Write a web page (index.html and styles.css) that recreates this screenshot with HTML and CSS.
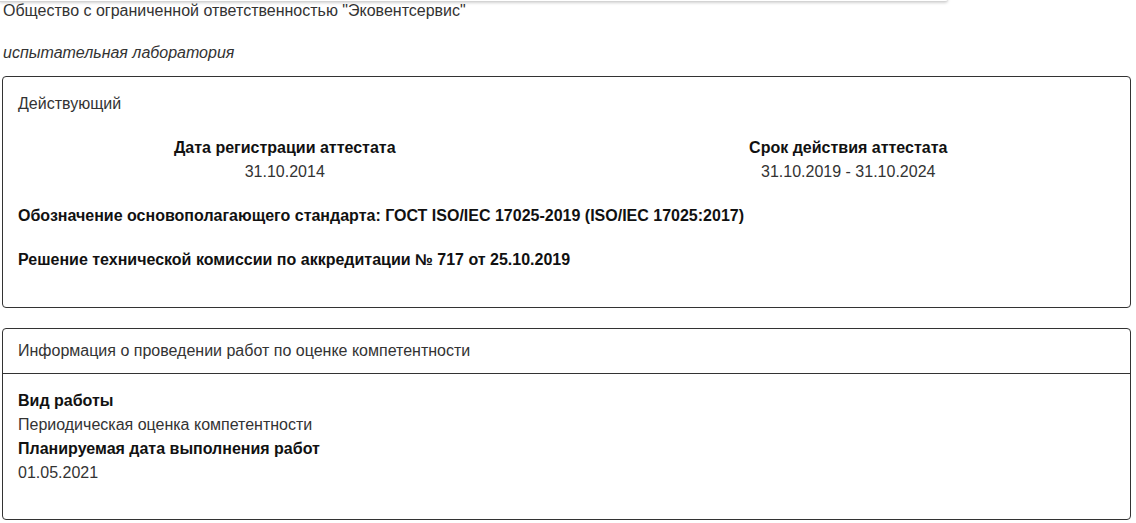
FILE: index.html
```html
<!DOCTYPE html>
<html lang="ru">
<head>
<meta charset="utf-8">
<title>Эковентсервис</title>
<link rel="stylesheet" href="styles.css">
</head>
<body>
<div class="top-panel"></div>
<div class="page">
  <p class="org-name">Общество с ограниченной ответственностью "Эковентсервис"</p>
  <p class="org-type">испытательная лаборатория</p>

  <section class="card">
    <div class="card-body">
      <div class="status">Действующий</div>
      <div class="dates">
        <div class="date-col">
          <div class="date-title">Дата регистрации аттестата</div>
          <div class="date-value">31.10.2014</div>
        </div>
        <div class="date-col">
          <div class="date-title">Срок действия аттестата</div>
          <div class="date-value">31.10.2019 - 31.10.2024</div>
        </div>
      </div>
      <p class="bold-line">Обозначение основополагающего стандарта: ГОСТ ISO/IEC 17025-2019 (ISO/IEC 17025:2017)</p>
      <p class="bold-line">Решение технической комиссии по аккредитации № 717 от 25.10.2019</p>
    </div>
  </section>

  <section class="card card-2">
    <div class="card-header">Информация о проведении работ по оценке компетентности</div>
    <div class="card-body2">
      <div class="label">Вид работы</div>
      <div class="value">Периодическая оценка компетентности</div>
      <div class="label">Планируемая дата выполнения работ</div>
      <div class="value">01.05.2021</div>
    </div>
  </section>
</div>
</body>
</html>
```

FILE: styles.css
```css
html, body {
  margin: 0;
  padding: 0;
  background: #fff;
}
body {
  font-family: "Liberation Sans", Arial, sans-serif;
  font-size: 16px;
  color: #333;
  position: relative;
}
.top-panel {
  position: absolute;
  left: 0;
  top: -10px;
  width: 948px;
  height: 11px;
  background: #fff;
  border-bottom: 1px solid #d4d4d4;
  border-bottom-right-radius: 3px;
  box-shadow: 0 1px 3px rgba(0, 0, 0, 0.18);
}
.page {
  padding: 1px 5px 0 2px;
}
.org-name {
  margin: 0 0 22px;
  padding-left: 1px;
  line-height: 20px;
}
.org-type {
  margin: 0 0 13px;
  padding-left: 1px;
  line-height: 20px;
  font-style: italic;
}
.card {
  border: 1px solid #333;
  border-radius: 4px;
}
.card-body {
  padding: 17px 15px 15px;
}
.status {
  line-height: 20px;
  margin-bottom: 22px;
}
.dates {
  display: grid;
  grid-template-columns: 1fr 1fr;
  margin: 0 -15px 20px;
  text-align: center;
}
.date-title {
  font-weight: bold;
  color: #111;
  line-height: 24px;
}
.date-value {
  line-height: 24px;
}
.bold-line {
  font-weight: bold;
  color: #111;
  margin: 0 0 20px;
  line-height: 24px;
}
.card-2 {
  margin-top: 20px;
}
.card-header {
  padding: 12px 15px 12px;
  line-height: 20px;
  border-bottom: 1px solid #333;
}
.card-body2 {
  padding: 15px 15px 34px;
  line-height: 24px;
}
.label {
  font-weight: bold;
  color: #111;
}
```
